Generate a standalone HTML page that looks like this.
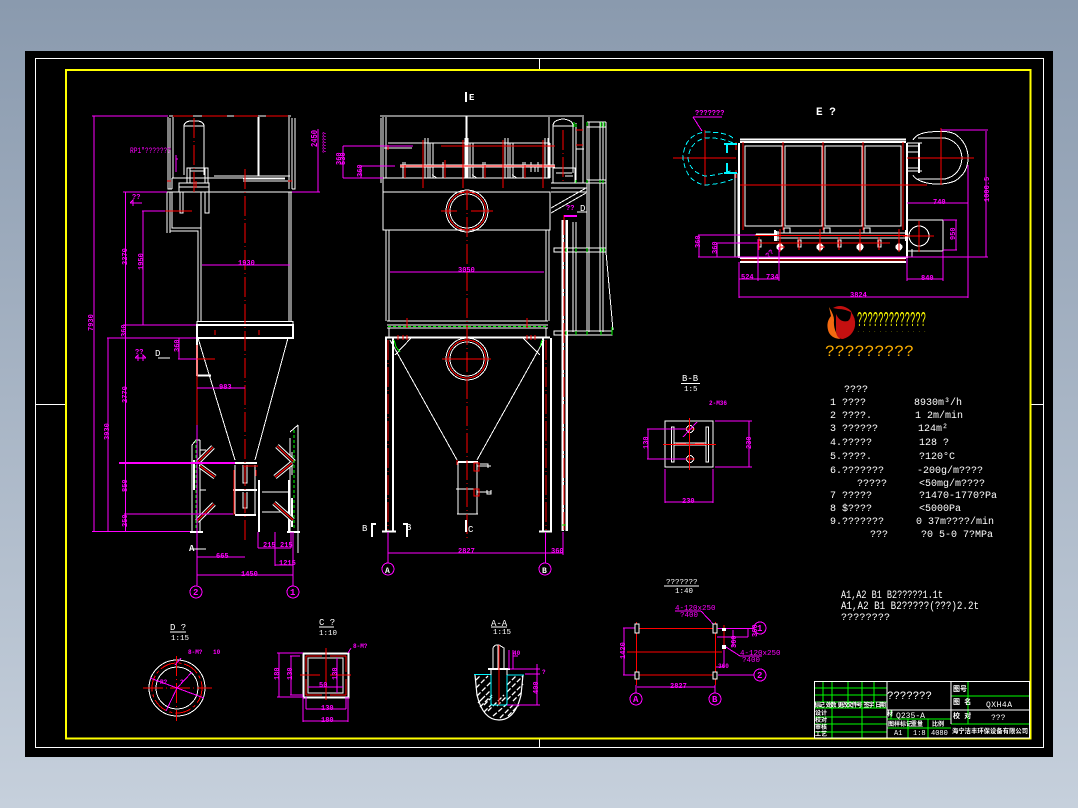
<!DOCTYPE html>
<html><head><meta charset="utf-8"><title>QXH4A</title>
<style>
html,body{margin:0;padding:0;width:1078px;height:808px;overflow:hidden;background:linear-gradient(#8a9aae,#c6d0dc)}
svg{position:absolute;left:0;top:0;display:block}
text{font-family:"Liberation Mono","Noto Sans CJK SC",monospace}
.w{fill:none;stroke:#fff;stroke-width:1}
.t{fill:none;stroke:#fff;stroke-width:2}
.r{fill:none;stroke:#f00;stroke-width:1}
.c{fill:none;stroke:#f00;stroke-width:1;stroke-dasharray:20 3 1 3}
.m{fill:none;stroke:#f0f;stroke-width:1}
.g{fill:none;stroke:#0f0;stroke-width:1}
.gd{fill:none;stroke:#0f0;stroke-width:1;stroke-dasharray:3 2}
.y{fill:none;stroke:#00f6ff;stroke-width:1}
.yd{fill:none;stroke:#00f6ff;stroke-width:1;stroke-dasharray:5 3}
.tm{fill:#f0f;font-size:7px;font-weight:bold}
.tw{fill:#fff;font-size:10px}
.ts{fill:#fff;font-size:6px;font-weight:bold}
</style></head><body>
<svg width="1078" height="808" viewBox="0 0 1078 808" shape-rendering="crispEdges">
<rect x="25" y="51" width="1028" height="706" fill="#000"/>
<path class="w" d="M35.5 58.5H1043.5V747.5H35.5ZM539.5 58V70M539.5 739V747M35 404.5H66M1031 404.5H1043"/>
<rect x="66" y="70" width="964.5" height="668.5" fill="none" stroke="#ff0" stroke-width="2"/>

<!-- LEFT VIEW -->
<path class="w" d="M168 117V189H172M170 118V189M173 117V178M172 178V189M289 117V189M292 118V189M295 118V189H292M258 117V176M259 117V176M169 116H291"/>
<path class="w" d="M172 178H262M214 176H290M226 178H285M243 181H290M243 179H285M184 175V126Q184 122 190 121H198Q204 122 204 126V175M184 126H204M187 168H208V183H187ZM190 171H205V183M190 168V183M205 168V183M179 183H209V192H179ZM179 187H209M180 192V213H183V192M205 192V213H209V192M167 192H292M167 192V233M170 192V233M172 192V228H201M170 231H198V321M201 192V321M289 192V321M291 192V321M197 321.5H293V325H197ZM198 338L235 460M288 338L255 460M193 338"/>
<path class="t" d="M197 325V338H293V325H197ZM197 339V376M197 375.5H211"/>
<path class="w" d="M235 465V514M255 465V514M243 465V483H247V465M243 492V508H247V492M192 445V532M200 440V532M192 445L196 440H200M290 438V532M298 425V553M298 425L290 432M292 452V475M262 492H289M262 512H289M200 450H206M200 490H206"/>
<path class="t" d="M234 463H257M233 490H257M235 515H256M259 480V532M289 480V532M190 532H203M287 532H300M194 460V490M292 498V527M199 466H202"/>
<g shape-rendering="auto">
<path fill="none" stroke="#fff" stroke-width="5" d="M198 462L213 447M200 466L215 477M197 521L214 504M277 446L294 462M275 477L292 463M274 503L293 520"/>
<path fill="none" stroke="#000" stroke-width="3" d="M198 462L213 447M200 466L215 477M197 521L214 504M277 446L294 462M275 477L292 463M274 503L293 520"/>
<path fill="none" stroke="#f00" stroke-width="1.2" d="M198 462L213 447M200 466L215 477M197 521L214 504M277 446L294 462M275 477L292 463M274 503L293 520"/>
</g>
<path class="gd" d="M196 440V530M294 430V530"/>
<path class="c" d="M245 169V540M194 118V195"/>
<path class="r" d="M173 116H193M202 116H227M234 116H258M266 116H288M259 330V335M215 330V335M165 211H192M197 359H215M197 345V480M197 551V570M234 470V515M256 470V476M243 466H258M196 181V188M171 181H167M288 181H292"/>
<path class="m" d="M94 116V532M108 338V532M125.500 192V532M143 211V325M92 116H168M123 192H167M142 211H165M123 325H196M107 338H196M92 531.500H190M124 514H233M179 338V359M178 359H197M197 388H245M197 425V586M293 532V586M197 557H245M197 575H293M258 532V548M258 548H291M291 532V548M275 532V566M275 565H293M318 129V192M292 192H320M178 159H176M176 155V172M202 265H290"/>
<path class="t" style="stroke:#f0f" d="M119 463H235"/>
<circle class="m" cx="196" cy="592" r="6"/><circle class="m" cx="293" cy="592" r="6"/>
<path class="w" d="M158 358H170M192 549H206"/>
<path class="m" d="M135 358H146M135 358L138 355V361M146 358L143 355V361M130 203H142M130 203L133 200V206"/>

<!-- MIDDLE VIEW -->
<path class="w" d="M380 116H584M381 118V183M383 117V178M386 117V178M549 117V178M583 117V183M587 122V332M589 122V332M600 122V332M603 122V332M606 122V250M383 178H550M383 192H550V230H383ZM383 178V192M386 230V321M389 230V321M546 230V321M549 230V321M387 321H548M387 325H548M387 328H548M389 328V337M546 328V337M551 183H587M551 188H587M551 192H587M551 208L586 188M551 213L586 193M587 122H606M587 127H606M587 180H606M587 183H606M554 248H606V252H554ZM554 331H612V335H554ZM562 220V531M566 220V531M573 222V332M576 222V332M606 252L613 330"/>
<path class="w" d="M553 173V126Q553 120 563 119Q573 120 573 126V173M553 126H573M553 168H575V183H553ZM556 173H572M565 176H573M576 123V183M575 170V175M576 149H584M388 143H550M400 165H555M400 167H555M384 148H412M425 138V178M428 138V178M465 138V178M468 138V178M505 138V178M508 138V178M545 138V178M548 138V178M403 162V178M405 162V178M443 162V178M445 162V178M483 162V178M485 162V178M523 162V178M525 162V178M430 143V178M433 143V178M470 143V178M473 143V178M510 143V178M513 143V178M550 143V178M432 175L437 178M472 175L477 178M512 175L517 178M431 178H437M471 178H477M511 178H517M531 162V172M535 165V172M538 162V172"/>
<path class="t" d="M466.500 116V178M385 337.500H550M386 338V531M393 338V531M543 338V531M551 338V531M382 531.500H396M539 531.500H552M458 462H478M563 220V531M567 220V531"/>
<path class="w" d="M458 462V514M477 462V514M456 489H478M457 514H478M390 340L457 460M544 340L477 460M411 338L395 355M523 338L540 355M477 466H491M480 464H488V468M477 492H491M487 490V494H491V490"/>
<circle class="w" cx="467" cy="211" r="21"/><circle class="w" cx="467" cy="211" r="17"/><circle class="r" cx="467" cy="211" r="19"/>
<circle class="w" cx="467" cy="359" r="21"/><circle class="w" cx="467" cy="359" r="17"/><circle class="r" cx="467" cy="359" r="19"/>
<path class="r" d="M441 211H457M471 211H493M442 359H491M388 145V150M384 146H412M441 146H555M400 166H555M423 140V188M463 140V188M503 140V188M543 140V188M445 160V178M405 165V178M485 165V178M525 165V178M576 145H583M576 130H583M407 318V328M527 318V328M398 335V340M403 335V340M407 335V340M527 335V340M531 335V340M535 335V340"/>
<path class="c" d="M467 190V540M388 340V530M546 340V530M564 215V530M563 130V182"/>
<path class="r" d="M474 463H479V471H474ZM474 489H479V496H474ZM457 460V465"/>
<path class="gd" d="M388 326.500H546"/>
<path class="g" d="M574 122V127M576 124V127M587 122V126M601 122V127M604 122V127M603 180V183M600 180V183M587 180V183M576 180V183M566 248V252M576 248V252M587 248V252M601 248V252M604 248V252M566 331V335M576 331V335M587 331V335M601 331V335M612 327V335M394 340L396 347L400 352M542 340L540 347M562 525H566"/>
<path class="m" d="M343 146V178M343 146H413M343 178H383M361 166V178M361 166H395M388 532V563M388 553H563M545.500 532V563M563 532V555M390 272H544"/>
<circle class="m" cx="388" cy="569" r="6"/><circle class="m" cx="545" cy="569" r="6"/>
<path class="t" d="M376 524H372V537M403 524H407V537M466 92V102M466 520V532"/>
<path class="t" style="stroke:#f0f" d="M564 216H577"/>
<path class="w" d="M577 212H587"/>

<!-- TOP RIGHT VIEW -->
<path class="t" d="M740 139.500H906M740 142H906M739 143V258M907 143V258M740 258H906M740 262H906"/>
<path class="w" d="M735 173V257H740M738 173V257M745 146H782V226H745ZM785 146H822V226H785ZM825 146H862V226H825ZM865 146H901V226H865ZM907 220H943V251H907ZM775 233H907M775 238H907M755 235H775M775 231V241M778 231V241M907 146H919M907 152H919M907 168H919M907 171H922M907 143H922M919 143V173M912 249V257"/>
<path class="t" d="M776 231V241M919 143V173"/>
<path class="w" d="M913 140Q917 133 930 132Q947 130 955 134Q968 143 968 158Q968 173 955 181Q942 186 927 183Q915 180 913 175M918 138H945Q961 142 962 158Q961 175 945 179H918"/>
<circle class="w" cx="919" cy="236" r="10"/>
<path class="w" d="M756 234H775M784 233V228H790V233M824 233V228H830V233M864 233V228H870V233M758 240H761V247H758ZM798 240H801V247H798ZM838 240H841V247H838ZM878 240H881V247H878Z"/>
<circle cx="780" cy="247" r="3.500" fill="#fff"/><circle cx="820" cy="247" r="3.500" fill="#fff"/><circle cx="860" cy="247" r="3.500" fill="#fff"/><circle cx="899" cy="247" r="3.500" fill="#fff"/>
<path class="t" d="M775 230V241M906 230V241"/>
<path class="r" d="M743 142V230M783 142V230M823 142V230M863 142V230M903 142V230M740 185H927M941 128V185M907 158H974M705 130V186M673 158H736M736 142V150M736 170V178M755 235.500H907M757 243H890M759 237V250M780 229V252M799 237V250M820 229V252M839 237V250M860 229V252M879 237V250M899 229V252M919 221V252M903 236H934M741 260H905M780 247H785M820 247H825"/>
<path class="yd" d="M733 138Q726 132 705 132Q684 135 683 158Q686 182 705 185Q722 184 733 179"/>
<path class="yd" d="M733 143Q720 137 705 138Q690 142 688 158Q690 172 705 176Q720 175 733 170"/>
<path class="t" style="stroke:#00f6ff" d="M724 144H737M727 144V153M727 163V174M724 173H737"/>
<path class="m" d="M693 117H722M693 117L702 131M698 235H755M699 235V257M716 243H757M717 243V257M698 257H988M986 131V257M941 130H988M968 165V298M739 262V298M739 297H968M739 279H779M758 240V281M779 247V281M907 258V281M943 251V281M907 279H943M907 203H968M956 220V250M943 220H957M943 250H957"/>

<!-- LOGO -->
<g shape-rendering="auto">
<path d="M829 307Q834 315 834 320Q833 330 840 339Q830 338 828 330Q826 322 831 316Z" fill="#f46a10"/>
<path d="M836 314Q840 323 848 321Q851 319 851 312Q856 318 855 326Q853 336 843 339Q836 339 836 330Z" fill="#c41010"/>
<path d="M833 308Q840 304 847 308Q851 310 852 313Q846 309 838 309Z" fill="#c41010"/>
</g>

<!-- SECTION D -->
<circle class="w" cx="177" cy="688" r="28"/><circle class="w" cx="177" cy="688" r="21"/>
<circle cx="177" cy="688" r="25" fill="none" stroke="#f00" stroke-dasharray="16 3 3 3"/>
<path class="c" d="M176.500 656V721M143 688H212"/>
<path class="m" d="M150 678L177 688L204 698M177 688L166 711M177 688L192 672M175 665L181 658"/>
<path class="w" d="M170 632H186"/>

<!-- SECTION C -->
<rect class="t" x="303.500" y="653.500" width="45" height="44"/>
<rect class="w" x="308" y="658" width="35" height="35"/>
<path class="r" d="M326 648V700M300 675H320M330 675H351M306 656H322M330 656H346M306 695H322M330 695H346M306 656V672M346 656V672M306 679V695M346 679V695"/>
<path class="m" d="M279 653V697M277 653H303M277 697H303M291 656V695M290 656H300M290 695H303M306 709H346M303 721H348M303 697V722M348 697V722M306 697V709M346 697V709M308 687H343M337 658V693M348 653L351 648"/>
<path class="w" d="M319 627H334"/>

<!-- SECTION A-A -->
<g shape-rendering="auto">
<path fill="none" stroke="#fff" stroke-width="1.2" d="M475 675L477 695Q483 720 499 720Q515 720 521 695L523 675"/>
<path fill="none" stroke="#fff" stroke-width="1.3" stroke-dasharray="5 2" d="M476 680L480 676M476 688L488 676M477 696L491 682M481 700L491 690M484 705L492 697M488 711L504 695M493 716L507 704M500 718L515 703M508 716L519 705M513 701L522 692M507 700L523 684M507 692L523 676M507 685L516 676M478 703L485 696M480 707L492 695M484 712L492 704M497 706L507 696"/>
</g>
<path class="y" d="M474 674.500H491V705H507V675H524"/>
<path class="w" d="M493 668V648Q495 644 499 645L504 648V668M498 645V668M491 675V670M507 675V670"/>
<path class="t" d="M488 669H510"/>
<path class="r" d="M499 645V705"/>
<path class="m" d="M537 664V705M510 669H540M525 674H540M507 705H540M509 650V669M513 650V669M513 656H518"/>
<path class="w" d="M491 627H507"/>

<!-- SECTION B-B -->
<rect class="w" x="665" y="421" width="48" height="46"/>
<rect class="w" x="671.500" y="427" width="2.500" height="35"/><rect class="w" x="706" y="427" width="2.500" height="35"/>
<path class="w" d="M674 443H706M674 445H706"/>
<circle class="w" cx="690" cy="429" r="3.500"/><circle class="w" cx="690" cy="459" r="3.500"/>
<path class="r" d="M689.500 418V470M663 444.500H716M676 444H686M695 444H704M685 429H695M685 459H695"/>
<path class="m" d="M648 429V459M647 429H686M647 459H686M749 421V467M715 421H752M715 467H752M665 469V503M713 469V503M665 502H713M683 437L697 422"/>
<path class="w" d="M681 383.500H700"/>

<!-- FOUNDATION -->
<path class="r" d="M635 628.500H720M627 652H722M630 675H715M636.500 622V685M715.500 622V685M724 625V660M717 637H724"/>
<path class="m" d="M718 628.500H754M718 675H754M636 685V693M715 685V693M624 628V675M623 628H636M623 675H636M637 687H715M724 650V668M716 667H724M733 630V647M717 637H748M748 628V637M675 611H701M701 611L715 626M740 656H762M726 647L740 656"/>
<g fill="#000" stroke="#fff"><rect x="635" y="624" width="4" height="9"/><rect x="713" y="624" width="4" height="9"/><rect x="635" y="672" width="4" height="7"/><rect x="713" y="672" width="4" height="7"/></g>
<rect x="722" y="628" width="4" height="3" fill="#fff"/><rect x="722" y="645" width="4" height="4" fill="#fff"/>
<circle class="m" cx="760" cy="628" r="6"/><circle class="m" cx="760" cy="675" r="6"/><circle class="m" cx="636" cy="699" r="6"/><circle class="m" cx="715" cy="699" r="6"/>
<path class="w" d="M664 586H699"/>

<!-- TITLE BLOCK -->
<path class="g" d="M814 688H887M814 695H887M814 702H887M814 708H887M814 717H887M814 724H887M814 732H887M823 681V702M832 681V738M848 681V708M862 681V738M874 681V708M951 696H1030M951 710H1030M951 724H1030M968 681V724M887 719H951M887 728H951M908 719V738M928 719V738M891 710V719"/>
<path class="w" d="M814.500 681.500H1029.500V738H814.500ZM887 681V738M951 681V724M887 710H1030"/>
</svg>

<svg width="1078" height="808" viewBox="0 0 1078 808" style="position:absolute;left:0;top:0">
<!-- magenta labels -->
<text x="130" y="153" fill="#f0f" font-size="8" textLength="41" lengthAdjust="spacingAndGlyphs">RP1"???????</text>
<text class="tm" transform="translate(317,147) rotate(-90)" style="font-size:9px" textLength="17" lengthAdjust="spacingAndGlyphs">2450</text>
<text class="tm" transform="translate(326,153) rotate(-90)" style="font-size:5px">???????</text>
<text class="tm" transform="translate(341,165) rotate(-90)">360</text>
<text class="tm" transform="translate(127,265) rotate(-90)">2270</text>
<text class="tm" transform="translate(143,270) rotate(-90)">1950</text>
<text class="tm" transform="translate(93,331) rotate(-90)">7930</text>
<text class="tm" transform="translate(126,337) rotate(-90)">360</text>
<text class="tm" x="238" y="265">1930</text>
<text class="tm" transform="translate(179,352) rotate(-90)">360</text>
<text class="tm" x="135" y="354">??</text>
<text x="155" y="356" fill="#fff" font-size="9">D</text>
<text class="tm" x="132" y="199">??</text>
<text class="tm" x="219" y="389">983</text>
<text class="tm" transform="translate(127,403) rotate(-90)">2770</text>
<text class="tm" transform="translate(109,440) rotate(-90)">3930</text>
<text class="tm" transform="translate(127,492) rotate(-90)">850</text>
<text class="tm" transform="translate(127,527) rotate(-90)">250</text>
<text x="189" y="551" fill="#fff" font-size="9" font-weight="bold">A</text>
<text class="tm" x="216" y="558">665</text>
<text class="tm" x="241" y="576">1450</text>
<text class="tm" x="263" y="547">215</text>
<text class="tm" x="280" y="547">215</text>
<text class="tm" x="279" y="565">1215</text>
<text x="193" y="595" fill="#f0f" font-size="9" font-weight="bold">2</text>
<text x="290" y="595" fill="#f0f" font-size="9" font-weight="bold">1</text>

<text class="tm" x="458" y="272">3050</text>
<text class="tm" transform="translate(345,165) rotate(-90)">530</text>
<text class="tm" transform="translate(362,177) rotate(-90)">360</text>
<text x="580" y="211" fill="#fff" font-size="9">D</text>
<text class="tm" x="566" y="210">??</text>
<text class="tm" x="458" y="553">2827</text>
<text class="tm" x="551" y="553">360</text>
<text x="385" y="573" fill="#fff" font-size="8" font-weight="bold">A</text>
<text x="542" y="573" fill="#fff" font-size="8" font-weight="bold">B</text>
<text x="362" y="531" fill="#fff" font-size="9">B</text>
<text x="406" y="530" fill="#fff" font-size="9">B</text>
<text x="468" y="532" fill="#fff" font-size="9">C</text>
<text x="469" y="100" fill="#fff" font-size="9" font-weight="bold">E</text>
<text x="816" y="115" fill="#fff" font-size="11" font-weight="bold">E ?</text>
<text class="tm" x="695" y="115">???????</text>
<text class="tm" x="933" y="204">740</text>
<text class="tm" transform="translate(989,202) rotate(-90)">1000.5</text>
<text class="tm" transform="translate(955,240) rotate(-90)">950</text>
<text class="tm" transform="translate(700,248) rotate(-90)">360</text>
<text class="tm" transform="translate(717,254) rotate(-90)">360</text>
<text class="tm" transform="translate(768,258) rotate(-45)">??</text>
<text class="tm" x="741" y="279">524</text>
<text class="tm" x="766" y="279">734</text>
<text class="tm" x="921" y="280">840</text>
<text class="tm" x="850" y="297">3824</text>

<text class="tm" x="213" y="654" style="font-size:6px">10</text>
<text class="tm" x="188" y="654" style="font-size:6px">8-M?</text>
<text class="tm" x="160" y="684" style="font-size:6px">R?</text>
<text class="tm" x="180" y="684" style="font-size:6px">?</text>
<text class="tm" x="353" y="648" style="font-size:6px">8-M?</text>
<text class="tm" transform="translate(279,680) rotate(-90)">180</text>
<text class="tm" transform="translate(292,680) rotate(-90)">130</text>
<text class="tm" x="319" y="687">50</text>
<text class="tm" x="321" y="710">130</text>
<text class="tm" x="321" y="722">180</text>
<text class="tm" transform="translate(337,680) rotate(-90)">130</text>
<text class="tm" x="709" y="405" style="font-size:6px">2-M36</text>
<text class="tm" transform="translate(648,449) rotate(-90)">130</text>
<text class="tm" transform="translate(751,449) rotate(-90)">230</text>
<text class="tm" x="682" y="503">230</text>
<text class="tm" x="513" y="655" style="font-size:6px">40</text>
<text class="tm" x="542" y="674" style="font-size:6px">?</text>
<text class="tm" transform="translate(538,694) rotate(-90)">400</text>
<text x="675" y="610" fill="#f0f" font-size="7.500">4-120x250</text>
<text x="680" y="617" fill="#f0f" font-size="7.500">?400</text>
<text x="740" y="655" fill="#f0f" font-size="7.500">4-120x250</text>
<text x="742" y="662" fill="#f0f" font-size="7.500">?400</text>
<text class="tm" transform="translate(625,659) rotate(-90)">1420</text>
<text class="tm" x="670" y="688">2827</text>
<text class="tm" x="718" y="668" style="font-size:6px">360</text>
<text class="tm" transform="translate(736,648) rotate(-90)">360</text>
<text class="tm" transform="translate(757,637) rotate(-90)">360</text>
<text x="757" y="631" fill="#f0f" font-size="9" font-weight="bold">1</text>
<text x="757" y="678" fill="#f0f" font-size="9" font-weight="bold">2</text>
<text x="633" y="702" fill="#f0f" font-size="9" font-weight="bold">A</text>
<text x="712" y="702" fill="#f0f" font-size="9" font-weight="bold">B</text>

<!-- view titles -->
<text x="170" y="630" fill="#fff" font-size="9">D ?</text><text x="171" y="640" fill="#fff" font-size="7.500">1:15</text>
<text x="319" y="625" fill="#fff" font-size="9">C ?</text><text x="319" y="635" fill="#fff" font-size="7.500">1:10</text>
<text x="491" y="626" fill="#fff" font-size="9">A-A</text><text x="493" y="634" fill="#fff" font-size="7.500">1:15</text>
<text x="682" y="381" fill="#fff" font-size="9">B-B</text><text x="684" y="391" fill="#fff" font-size="7.500">1:5</text>
<text x="666" y="584" fill="#fff" font-size="7.500">???????</text><text x="675" y="593" fill="#fff" font-size="7.500">1:40</text>

<!-- logo text -->
<text x="857" y="326" fill="#ff0" font-size="21" textLength="69" lengthAdjust="spacingAndGlyphs">?????????????</text>
<text x="857" y="332" fill="#ff0" font-size="4" textLength="69">. . . . . . . . . . . . .</text>
<text x="825" y="356" fill="#ffb000" font-size="16" textLength="89" lengthAdjust="spacingAndGlyphs">?????????</text>

<!-- specs -->
<text class="tw" x="844" y="392">????</text>
<text class="tw" x="830" y="405">1 ????</text><text class="tw" x="914" y="405">8930m³/h</text>
<text class="tw" x="830" y="418">2 ????.</text><text class="tw" x="915" y="418">1 2m/min</text>
<text class="tw" x="830" y="431">3 ??????</text><text class="tw" x="918" y="431">124m²</text>
<text class="tw" x="830" y="445">4.?????</text><text class="tw" x="919" y="445">128 ?</text>
<text class="tw" x="830" y="459">5.????.</text><text class="tw" x="919" y="459">?120°C</text>
<text class="tw" x="830" y="473">6.???????</text><text class="tw" x="917" y="473">-200g/m????</text>
<text class="tw" x="857" y="486">?????</text><text class="tw" x="919" y="486">&lt;50mg/m????</text>
<text class="tw" x="830" y="498">7 ?????</text><text class="tw" x="919" y="498">?1470-1770?Pa</text>
<text class="tw" x="830" y="511">8 $????</text><text class="tw" x="919" y="511">&lt;5000Pa</text>
<text class="tw" x="830" y="524">9.???????</text><text class="tw" x="916" y="524">0 37m????/min</text>
<text class="tw" x="870" y="537">???</text><text class="tw" x="921" y="537">?0 5-0 7?MPa</text>

<text x="841" y="598" fill="#fff" font-size="11" textLength="102" lengthAdjust="spacingAndGlyphs">A1,A2 B1 B2?????1.1t</text>
<text x="841" y="609" fill="#fff" font-size="11" textLength="138" lengthAdjust="spacingAndGlyphs">A1,A2 B1 B2?????(???)2.2t</text>
<text x="841" y="620" fill="#fff" font-size="10" textLength="49">????????</text>

<!-- title block text -->
<text x="887" y="699" fill="#fff" font-size="11" textLength="45">???????</text>
<text x="896" y="718" fill="#fff" font-size="8" textLength="29" lengthAdjust="spacingAndGlyphs">Q235-A</text>
<text x="887" y="716" fill="#fff" font-size="6" font-weight="bold">材</text>
<text x="986" y="707" fill="#fff" font-size="8" textLength="26">QXH4A</text>
<text x="991" y="720" fill="#fff" font-size="8">???</text>
<text x="894" y="735" fill="#fff" font-size="7">A1</text>
<text x="913" y="735" fill="#fff" font-size="7">1:8</text>
<text x="931" y="735" fill="#fff" font-size="7">4080</text>
<text class="ts" x="888" y="726">图样标记</text>
<text class="ts" x="911" y="726">重量</text>
<text class="ts" x="932" y="726">比例</text>
<text fill="#fff" font-size="7" font-weight="bold" x="953" y="691">图号</text>
<text fill="#fff" font-size="7" font-weight="bold" x="953" y="704">图 名</text>
<text fill="#fff" font-size="7" font-weight="bold" x="953" y="718">校 对</text>
<text fill="#fff" font-size="6.300" font-weight="bold" x="952" y="733" textLength="76">海宁洁丰环保设备有限公司</text>
<text class="ts" x="814" y="707" textLength="72">标记 处数 更改文件号 签字 日期</text>
<text class="ts" x="815" y="715">设计</text>
<text class="ts" x="815" y="722">校对</text>
<text class="ts" x="815" y="729">审核</text>
<text class="ts" x="815" y="736">工艺</text>
</svg>
</body></html>
